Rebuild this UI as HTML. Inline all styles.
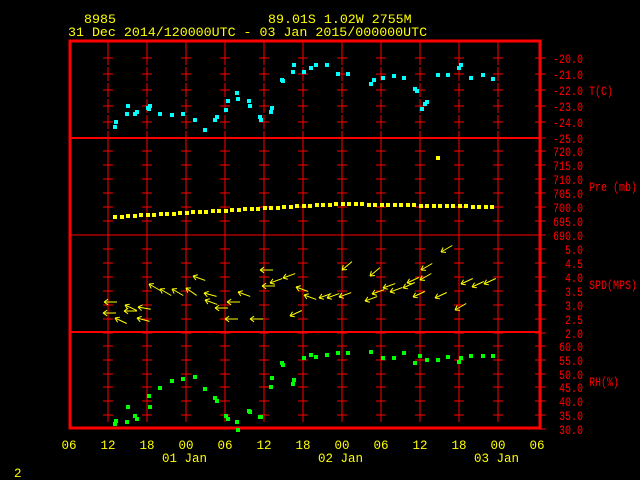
<!DOCTYPE html>
<html><head><meta charset="utf-8"><style>
html,body{margin:0;padding:0;background:#000;width:640px;height:480px;overflow:hidden}
svg{display:block}
text{font-family:"Liberation Mono",monospace;font-size:13.3px}
.s{font-size:13px}
.b{font-size:12.5px}
</style></head><body>
<svg id="s" width="640" height="480" xmlns="http://www.w3.org/2000/svg">
<g fill="#ffff00">
<text x="84" y="23">8985</text>
<text x="268" y="23">89.01S   1.02W  2755M</text>
<text x="68" y="36">31 Dec 2014/120000UTC - 03 Jan 2015/000000UTC</text>
<text x="14" y="477" class="b">2</text>
<text x="162" y="462" class="b">01 Jan</text>
<text x="318" y="462" class="b">02 Jan</text>
<text x="474" y="462" class="b">03 Jan</text>
</g>
<g id="g"></g>
</svg>
<script>
var g=document.getElementById('g'),h='';
function L(x1,y1,x2,y2,c,w){h+='<line x1="'+x1+'" y1="'+y1+'" x2="'+x2+'" y2="'+y2+'" stroke="'+(c||'#f00')+'" stroke-width="'+(w||1)+'"/>';}
function T(x,y,t,c,a,cl){h+='<text class="'+(cl||'s')+'" x="'+x+'" y="'+y+'" fill="'+(c||'#f00')+'"'+(a?' text-anchor="'+a+'"':'')+'>'+t+'</text>';}
function S(x,y,t,right){var w=t.length*6;if(right)x=x-w;h+='<text class="s" x="'+x+'" y="'+y+'" fill="#f00" textLength="'+w+'" lengthAdjust="spacingAndGlyphs">'+t+'</text>';}
function R(x,y,c,s){s=s||4;h+='<rect x="'+(x-s/2)+'" y="'+(y-s/2)+'" width="'+s+'" height="'+s+'" fill="'+c+'"/>';}
var gx=[];for(var i=1;i<12;i++)gx.push(69+i*39);
var ys=[];
function ticks(y0,step,n,lab){for(var k=0;k<n;k++){var y=Math.round(y0+k*step);ys.push(y);L(535,y,546,y);S(583,y+5,lab[k],1);}}
ticks(58,16,6,['-20.0','-21.0','-22.0','-23.0','-24.0','-25.0']);
ticks(151,14,7,['720.0','715.0','710.0','705.0','700.0','695.0','690.0']);
ticks(249,14,7,['5.0','4.5','4.0','3.5','3.0','2.5','2.0']);
ticks(346,13.8,7,['60.0','55.0','50.0','45.0','40.0','35.0','30.0']);
S(589,95,'T(C)');S(589,191,'Pre (mb)');S(589,289,'SPD(MPS)');S(589,386,'RH(%)');
gx.forEach(function(x){ys.forEach(function(y){if(y<45||y>425)return;L(x,y-7,x,y+7);L(x-5,y,x+5,y);});L(x,42,x,52);});
L(70,138,540,138,'#f00',2);L(70,235,540,235,'#f00',1);L(70,332,540,332,'#f00',2);
h+='<rect x="70" y="41" width="470" height="387" fill="none" stroke="#f00" stroke-width="3"/>';
var lb=['06','12','18','00','06','12','18','00','06','12','18','00','06'];
for(var i=0;i<13;i++)T(69+i*39,449,lb[i],'#ff0','middle','b');
var c=[[115,127],[116,122],[127,114],[128,106],[135,114],[137,112],[149,109],[150,106],[148,108],[160,114],[172,115],[183,114],[195,120],[205,130],[215,120],[217,117],[226,110],[228,101],[237,93],[238,99],[249,101],[250,106],[260,117],[261,120],[272,108],[271,112],[282,80],[283,81],[293,72],[294,65],[304,72],[311,68],[316,65],[327,65],[338,74],[348,74],[371,84],[374,80],[383,78],[394,76],[404,78],[415,89],[417,91],[422,109],[425,104],[427,102],[438,75],[448,75],[459,68],[461,65],[471,78],[483,75],[493,79]];
c.forEach(function(p){R(p[0],p[1],'#00ffff');});
for(var x=115;x<=496;x+=6.5){var y=x<340?217-(x-115)*13/225:204+(x-340)*3/155;R(Math.round(x),Math.round(y),'#ffff00');}
R(438,158,'#ffff00');
var gr=[[115,424],[116,421],[127,422],[128,407],[135,416],[137,419],[149,396],[150,407],[160,388],[172,381],[183,379],[195,377],[205,389],[215,398],[217,401],[226,416],[228,419],[237,422],[238,430],[249,411],[250,412],[260,417],[261,417],[272,378],[271,387],[282,363],[283,365],[293,384],[294,380],[304,358],[311,355],[316,357],[327,355],[338,353],[348,353],[371,352],[383,358],[394,358],[404,353],[415,363],[420,356],[427,360],[438,360],[448,357],[459,362],[461,358],[471,356],[483,356],[493,356]];
gr.forEach(function(p){R(p[0],p[1],'#00ff00');});
var a=[[104,302,0],[103,313,0],[115,318,25],[125,305,25],[124,311,0],[138,307,10],[137,318,15],[149,284,30],[160,289,30],[172,289,30],[186,288,35],[193,276,20],[204,293,15],[205,300,20],[215,308,0],[227,302,0],[225,319,0],[238,292,20],[250,319,0],[260,270,0],[262,286,0],[270,283,-20],[283,278,-20],[290,316,-25],[296,287,20],[304,295,20],[319,298,-20],[327,298,-20],[339,297,-20],[342,270,-40],[365,301,-20],[370,276,-40],[372,294,-20],[383,288,-20],[390,292,-20],[403,288,-25],[407,283,-25],[413,297,-25],[421,270,-30],[420,280,-30],[435,298,-25],[441,252,-30],[455,310,-30],[461,284,-25],[472,287,-25],[484,284,-25]];
a.forEach(function(p){var r=p[2]*Math.PI/180,dx=Math.cos(r),dy=Math.sin(r),x=p[0],y=p[1];L(x,y,x+13*dx,y+13*dy,'#ff0');
var r1=r+0.6,r2=r-0.6;L(x,y,x+5*Math.cos(r1),y+5*Math.sin(r1),'#ff0');L(x,y,x+5*Math.cos(r2),y+5*Math.sin(r2),'#ff0');});
g.innerHTML=h;
</script>
</body></html>
